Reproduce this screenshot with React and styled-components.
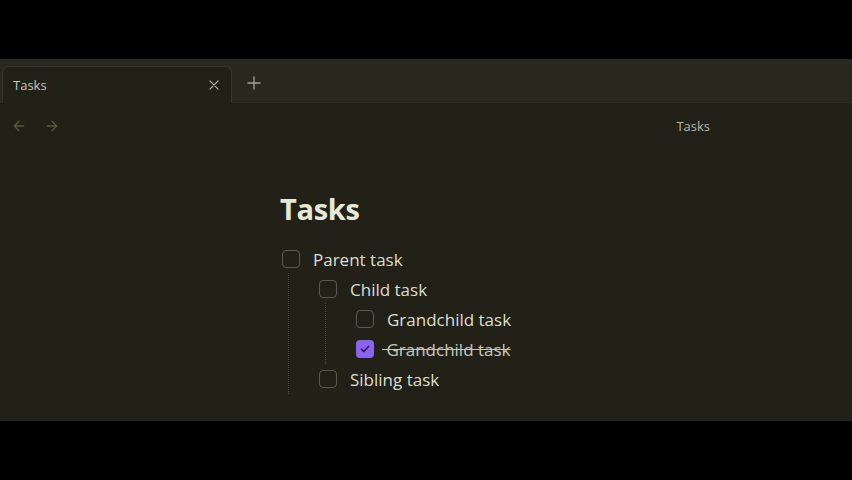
import styled, { createGlobalStyle } from "styled-components";

const Global = createGlobalStyle`
  html, body {
    margin: 0;
    padding: 0;
    background: #000;
  }
  body {
    font-family: "Open Sans", "Noto Sans", sans-serif;
  }
`;

const Frame = styled.div`
  width: 852px;
  height: 480px;
  padding-top: 59px;
  box-sizing: border-box;
  background: #000;
`;

const Window = styled.div`
  height: 362px;
  display: flex;
  flex-direction: column;
  background: #212118;
  overflow: hidden;
`;

const TabStrip = styled.div`
  height: 44px;
  display: flex;
  align-items: flex-end;
  padding-left: 2px;
  background: #28281f;
  border-bottom: 1px solid #2e2e25;
  box-sizing: border-box;
`;

const Tab = styled.div`
  width: 230px;
  height: 37px;
  display: flex;
  align-items: center;
  justify-content: space-between;
  padding: 0 10px 0 10px;
  box-sizing: border-box;
  background: #212118;
  border: 1px solid #36362c;
  border-bottom: none;
  border-radius: 6px 6px 0 0;
  margin-bottom: -1px;
`;

const TabLabel = styled.span`
  font-size: 13px;
  color: #c8c8bc;
`;

const IconButton = styled.span`
  display: flex;
  align-items: center;
  justify-content: center;
  color: ${(p) => p.color || "#a0a094"};
`;

const NewTab = styled(IconButton)`
  height: 37px;
  width: 44px;
  align-self: flex-end;
  margin-bottom: 1px;
`;

const NavBar = styled.div`
  height: 46px;
  display: flex;
  align-items: center;
  padding-left: 11px;
  padding-right: 142px;
  gap: 17px;
`;

const ViewTitle = styled.span`
  margin-left: auto;
  font-size: 13px;
  color: #b8b8ac;
`;

const Content = styled.div`
  padding-left: 280px;
  padding-top: 42px;
`;

const Heading = styled.h1`
  margin: 0 0 17px 0;
  font-size: 29px;
  font-weight: 700;
  line-height: 36px;
  color: #e8e8d8;
  letter-spacing: -0.3px;
`;

const List = styled.ul`
  list-style: none;
  margin: 0;
  padding: 0;
  position: relative;
`;

const Nested = styled(List)`
  margin-left: 37px;
  &::before {
    content: "";
    position: absolute;
    left: -29px;
    top: -1px;
    bottom: 0;
    border-left: 1px dotted #46463a;
  }
`;

const Item = styled.li`
  margin: 0;
`;

const Row = styled.div`
  height: 30px;
  display: flex;
  align-items: center;
  gap: 13px;
  padding-left: 2px;
`;

const Box = styled.span`
  width: 18px;
  height: 18px;
  box-sizing: border-box;
  border-radius: 4px;
  border: ${(p) => (p.checked ? "none" : "1.5px solid #5a5a4e")};
  background: ${(p) => (p.checked ? "#8a63f0" : "transparent")};
  display: flex;
  align-items: center;
  justify-content: center;
  flex-shrink: 0;
`;

const Label = styled.span`
  font-size: 17px;
  color: ${(p) => (p.done ? "#c8c8b8" : "#dedece")};
  text-decoration: ${(p) => (p.done ? "line-through" : "none")};
  margin-left: ${(p) => (p.done ? "-5px" : "0")};
  white-space: pre;
`;

const Check = () => (
  <svg width="12" height="12" viewBox="0 0 24 24" fill="none" stroke="#2a2040" strokeWidth="3.5" strokeLinecap="round" strokeLinejoin="round">
    <path d="M5 12.5l4.5 4.5L19 7" />
  </svg>
);

const Close = () => (
  <svg width="14" height="14" viewBox="0 0 24 24" fill="none" stroke="currentColor" strokeWidth="2" strokeLinecap="round">
    <path d="M5 5l14 14M19 5L5 19" />
  </svg>
);

const Plus = () => (
  <svg width="18" height="18" viewBox="0 0 24 24" fill="none" stroke="currentColor" strokeWidth="1.8" strokeLinecap="round">
    <path d="M12 4v16M4 12h16" />
  </svg>
);

const Arrow = ({ dir }) => (
  <svg width="16" height="16" viewBox="0 0 24 24" fill="none" stroke="currentColor" strokeWidth="2" strokeLinecap="round" strokeLinejoin="round">
    {dir === "left" ? <path d="M19 12H5M12 19l-7-7 7-7" /> : <path d="M5 12h14M12 5l7 7-7 7" />}
  </svg>
);

const Task = ({ text, done, children }) => (
  <Item>
    <Row>
      <Box checked={done}>{done && <Check />}</Box>
      <Label done={done}>{done ? " " + text : text}</Label>
    </Row>
    {children && <Nested>{children}</Nested>}
  </Item>
);

export default function App() {
  return (
    <>
      <Global />
      <Frame>
        <Window>
          <TabStrip>
            <Tab>
              <TabLabel>Tasks</TabLabel>
              <IconButton color="#b8b8ac"><Close /></IconButton>
            </Tab>
            <NewTab><Plus /></NewTab>
          </TabStrip>
          <NavBar>
            <IconButton color="#58583e"><Arrow dir="left" /></IconButton>
            <IconButton color="#58583e"><Arrow dir="right" /></IconButton>
            <ViewTitle>Tasks</ViewTitle>
          </NavBar>
          <Content>
            <Heading>Tasks</Heading>
            <List>
              <Task text="Parent task">
                <Task text="Child task">
                  <Task text="Grandchild task" />
                  <Task text="Grandchild task" done />
                </Task>
                <Task text="Sibling task" />
              </Task>
            </List>
          </Content>
        </Window>
      </Frame>
    </>
  );
}
